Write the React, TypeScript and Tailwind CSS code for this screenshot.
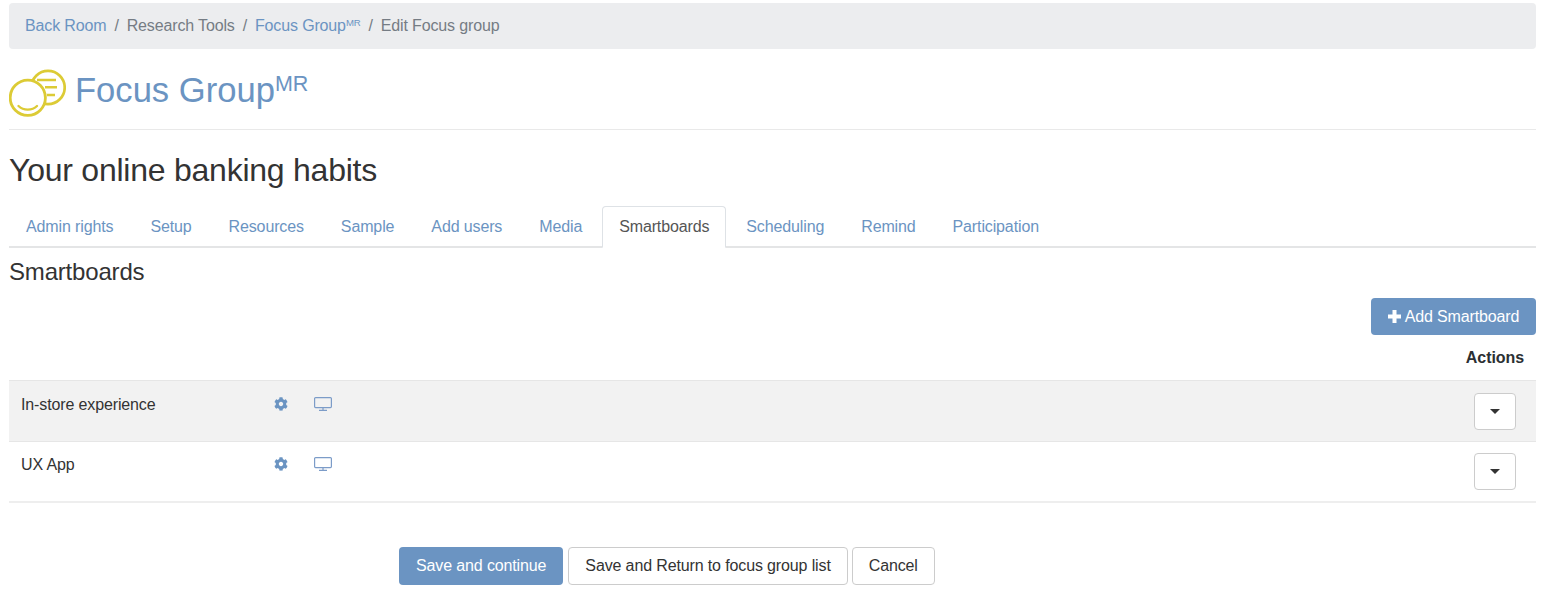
import React from "react";

const tabs = ["Admin rights", "Setup", "Resources", "Sample", "Add users", "Media", "Smartboards", "Scheduling", "Remind", "Participation"];

function Logo() {
  return (
    <svg width="57" height="48" viewBox="0 0 57 48" fill="none" className="shrink-0">
      <circle cx="39" cy="18.500" r="16.700" stroke="#dccb35" strokeWidth="2.700" />
      <path d="M28 11h19M36 18.300h12M38 26h8" stroke="#dccb35" strokeWidth="2.600" />
      <circle cx="18.800" cy="28.800" r="17.600" fill="#fff" stroke="#dccb35" strokeWidth="2.800" />
      <path d="M9.500 37c5 4.800 13.500 4.800 18.500 0" stroke="#dccb35" strokeWidth="2.400" strokeLinecap="round" />
    </svg>
  );
}

function Gear() {
  return (
    <svg width="14" height="14" viewBox="0 0 512 512" fill="#6b94c2">
      <path d="M487.400 315.700l-42.600-24.600c4.300-23.200 4.300-47 0-70.200l42.600-24.600c4.900-2.800 7.100-8.600 5.500-14-11.100-35.600-30-67.800-54.700-94.600-3.800-4.100-10-5.100-14.800-2.300L380.800 110c-17.900-15.400-38.500-27.300-60.800-35.100V25.800c0-5.600-3.900-10.500-9.400-11.700-36.700-8.200-74.300-7.800-109.200 0-5.500 1.200-9.400 6.100-9.400 11.700V75c-22.200 7.900-42.800 19.800-60.800 35.100L88.700 85.500c-4.900-2.800-11-1.900-14.800 2.300-24.700 26.700-43.600 58.900-54.700 94.600-1.700 5.400.600 11.200 5.500 14L67.300 221c-4.300 23.200-4.300 47 0 70.200l-42.600 24.600c-4.900 2.800-7.100 8.600-5.500 14 11.100 35.600 30 67.800 54.700 94.600 3.800 4.100 10 5.100 14.800 2.300l42.600-24.600c17.900 15.400 38.500 27.300 60.800 35.100v49.200c0 5.600 3.900 10.500 9.400 11.700 36.700 8.200 74.300 7.800 109.200 0 5.500-1.200 9.400-6.100 9.400-11.700v-49.200c22.200-7.900 42.800-19.800 60.800-35.100l42.600 24.600c4.900 2.800 11 1.900 14.800-2.300 24.700-26.700 43.600-58.900 54.700-94.600 1.500-5.500-.7-11.300-5.600-14.100zM256 336c-44.100 0-80-35.900-80-80s35.900-80 80-80 80 35.900 80 80-35.900 80-80 80z" />
    </svg>
  );
}

function Monitor() {
  return (
    <svg width="18" height="14" viewBox="0 0 18 14" fill="none" stroke="#7c9cc8" strokeWidth="1.200">
      <rect x="0.600" y="0.600" width="16.800" height="10" rx="1" />
      <path d="M9 11v2M5 13.400h8" />
    </svg>
  );
}

function Row({ name, shaded }: { name: string; shaded?: boolean }) {
  return (
    <div className={`flex border-t border-[#e6e6e6] ${shaded ? "h-[61px] bg-[#f2f2f2]" : "h-[60px]"}`}>
      <div className={`w-[252px] pl-3 text-[#333] ${shaded ? "pt-[12px]" : "pt-[11px]"}`}>{name}</div>
      <div className={`flex items-start gap-[26px] pl-[13px] ${shaded ? "pt-[16px]" : "pt-[15px]"}`}>
        <Gear />
        <Monitor />
      </div>
      <div className={`ml-auto pr-5 ${shaded ? "pt-3" : "pt-[11px]"}`}>
        <button className="flex h-[37px] w-[42px] items-center justify-center rounded border border-[#ccc] bg-white">
          <span className="border-x-[5px] border-t-[5px] border-x-transparent border-t-[#333]" />
        </button>
      </div>
    </div>
  );
}

export default function App() {
  return (
    <div className="min-h-[610px] bg-white px-[9px] pt-[3px] font-['Liberation_Sans',Arial,sans-serif] text-base tracking-[-0.13px] text-[#333]">
      <nav className="flex h-[46px] items-center gap-2 rounded bg-[#ecedef] px-4 tracking-[-0.145px] text-[#757c84]">
        <a className="text-[#6b94c2]">Back Room</a>
        <span>/</span>
        <span>Research Tools</span>
        <span>/</span>
        <a className="text-[#6b94c2]">
          Focus Group<sup className="text-[9.600px]">MR</sup>
        </a>
        <span>/</span>
        <span>Edit Focus group</span>
      </nav>

      <header className="mt-[20px] flex h-[61px] items-start gap-[9px] border-b border-[#e9e9e9]">
        <Logo />
        <h1 className="text-[34.600px] leading-[43px] tracking-normal text-[#6b94c2]">
          Focus Group<sup className="text-[21.500px]">MR</sup>
        </h1>
      </header>

      <h2 className="mt-[20px] text-[32px] leading-[40px] tracking-[-0.24px] text-[#333]">Your online banking habits</h2>

      <ul className="mt-4 flex h-[42px] gap-[3px] border-b-2 border-[#e4e5e6] text-[#6b94c2]">
        {tabs.map((t) =>
          t === "Smartboards" ? (
            <li key={t} className="h-[42px] rounded-t border border-b-white border-[#dee2e6] bg-white px-4 pt-2 text-[#555]">
              {t}
            </li>
          ) : (
            <li key={t} className="px-[17px] pt-[9px]">
              {t}
            </li>
          )
        )}
      </ul>

      <h3 className="mt-[8.500px] text-[24px] leading-[30px] tracking-[-0.18px] text-[#333]">Smartboards</h3>

      <div className="mt-[11.500px] flex justify-end">
        <button className="flex h-[37px] w-[165px] items-center justify-center gap-[4px] rounded bg-[#6b94c2] text-white">
          <svg width="13" height="13" viewBox="0 0 13 13" fill="#fff">
            <path d="M4.500 0h4v4.500H13v4H8.500V13h-4V8.500H0v-4h4.500z" />
          </svg>
          Add Smartboard
        </button>
      </div>

      <div className="flex h-[45px] items-start justify-end pr-3 pt-[11px] font-bold tracking-[-0.07px] text-[#2b2f33]">Actions</div>

      <div className="border-b-2 border-[#eeeeee]">
        <Row name="In-store experience" shaded />
        <Row name="UX App" />
      </div>

      <div className="mt-[44px] flex pl-[390px]">
        <button className="h-[38px] rounded bg-[#6b94c2] px-[17px] text-white">Save and continue</button>
        <button className="ml-[5px] h-[38px] rounded border border-[#ccc] bg-white px-4 text-[#333]">Save and Return to focus group list</button>
        <button className="ml-[4px] h-[38px] rounded border border-[#ccc] bg-white px-4 text-[#333]">Cancel</button>
      </div>
    </div>
  );
}
